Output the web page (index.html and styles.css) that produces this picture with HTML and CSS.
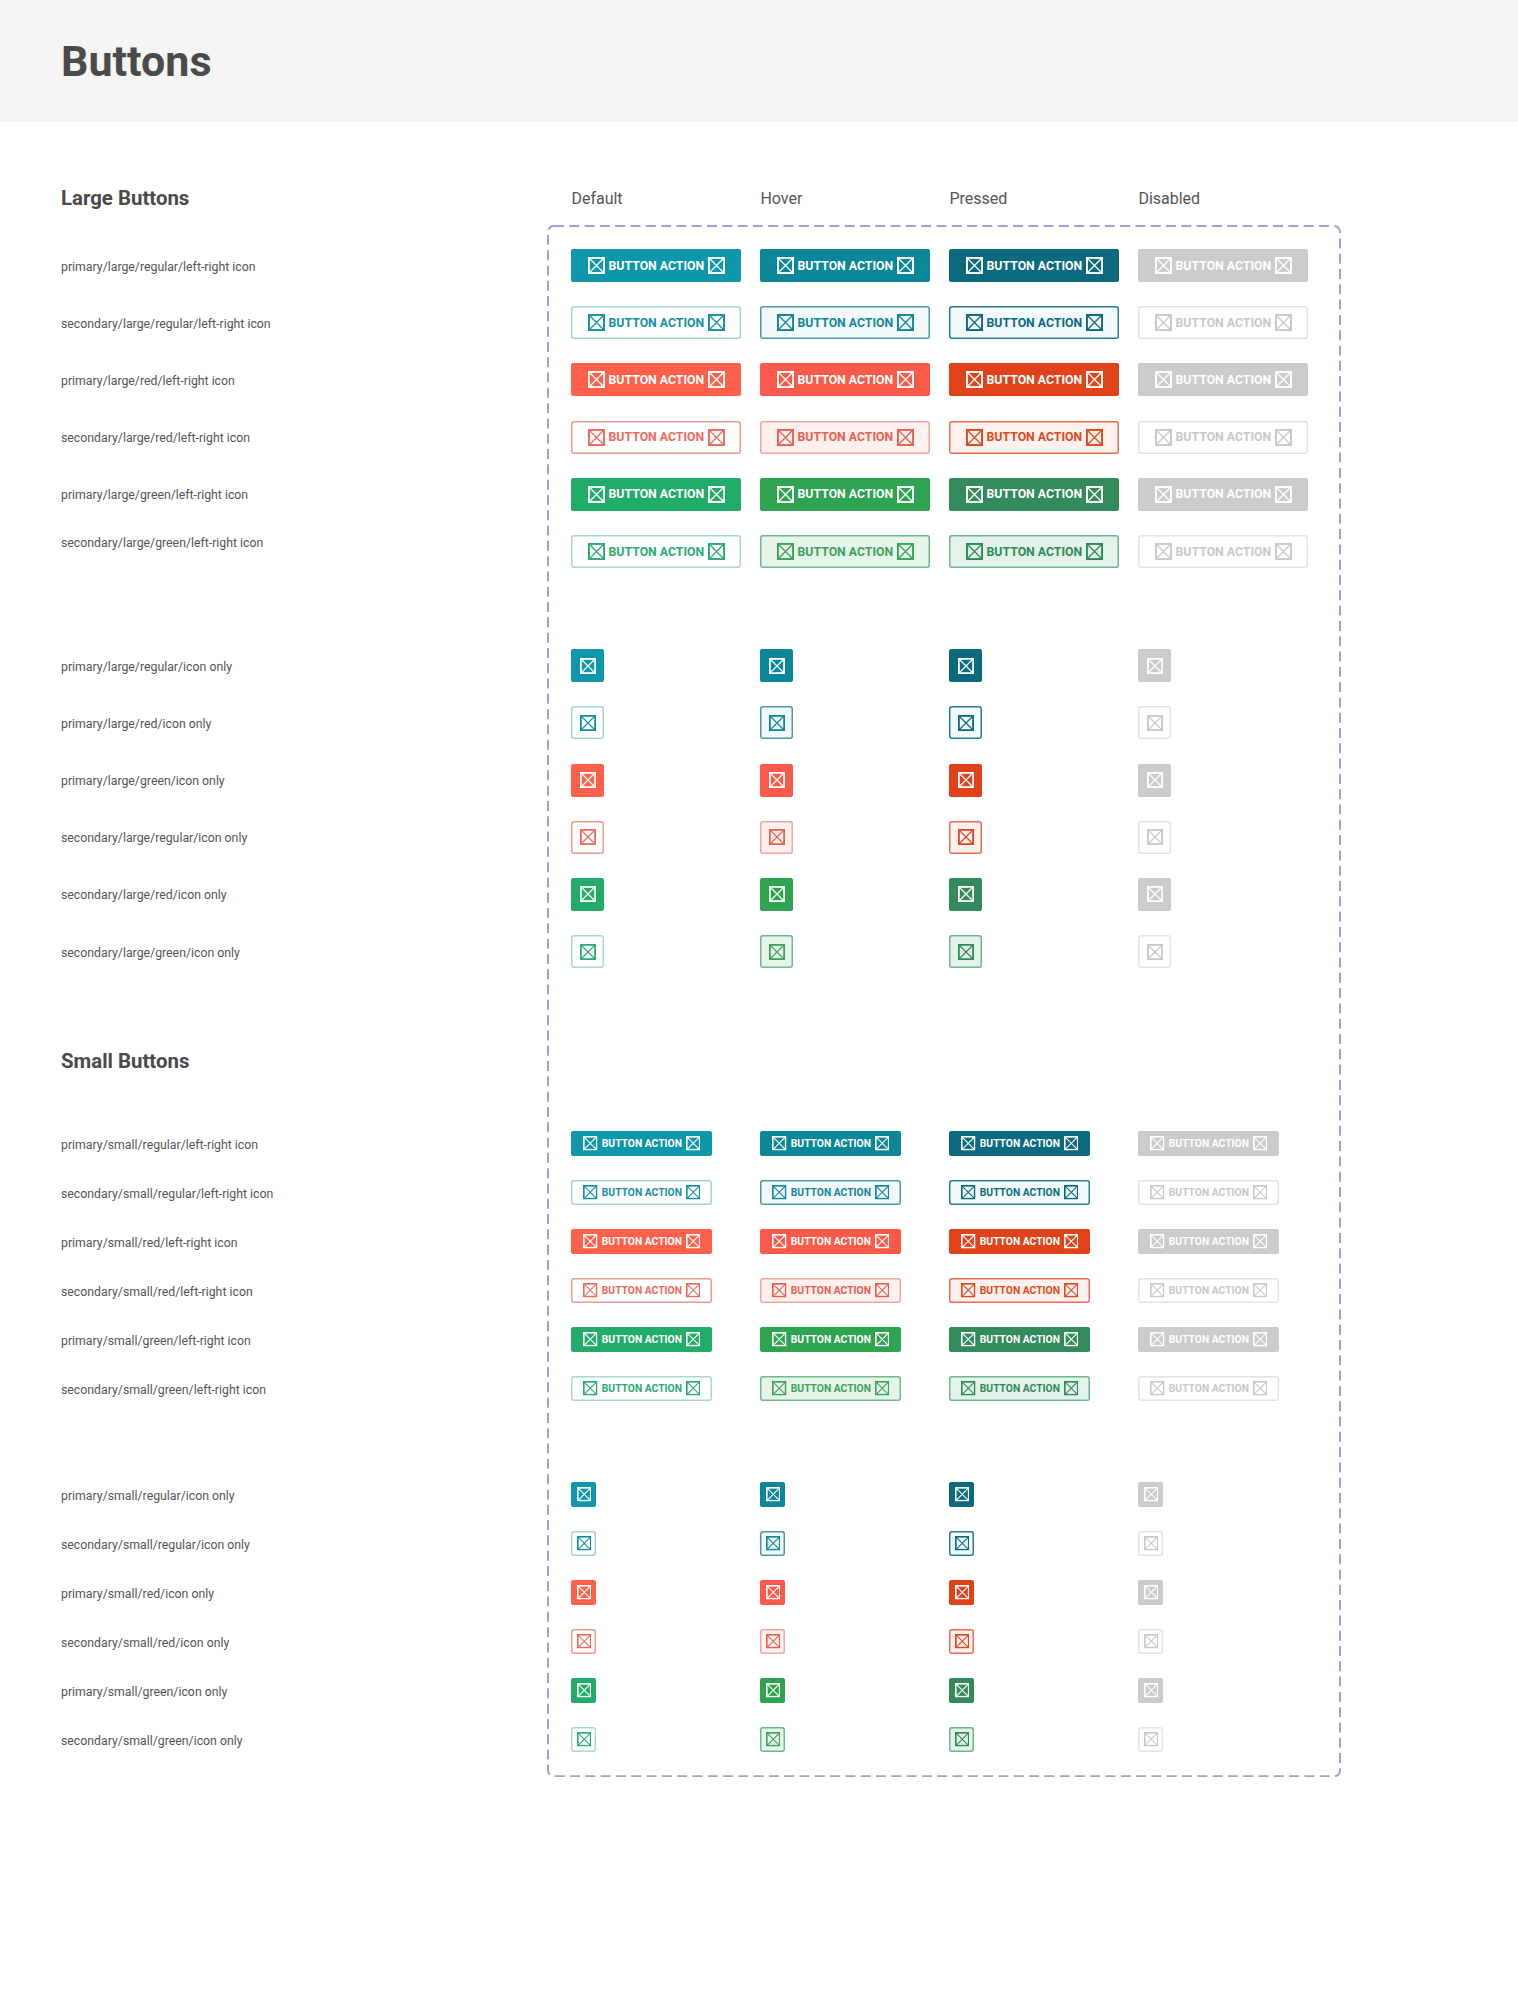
FILE: index.html
```html
<!DOCTYPE html>
<html lang="en">
<head>
  <meta charset="UTF-8" />
  <meta name="viewport" content="width=device-width, initial-scale=1" />
  <title>Buttons</title>
  <link rel="stylesheet" href="styles.css">
</head>
<body>

  <!-- Placeholder icon, reused by every button -->
  <svg class="sprite" aria-hidden="true" focusable="false">
    <symbol id="box-x" viewBox="0 0 16 16">
      <rect x="0.9" y="0.9" width="14.2" height="14.2" fill="none" stroke="currentColor" stroke-width="1.8" />
      <path d="M1 1L15 15M15 1L1 15" fill="none" stroke="currentColor" stroke-width="1.2" />
    </symbol>
  </svg>

  <header class="page-header">
    <h1>Buttons</h1>
  </header>

  <main class="board">
    <!-- Left column: row names -->
    <div class="names">
      <h2 class="names-title">Large Buttons</h2>
      <div class="group">
        <div class="name name-large">primary/large/regular/left-right icon</div>
        <div class="name name-large">secondary/large/regular/left-right icon</div>
        <div class="name name-large">primary/large/red/left-right icon</div>
        <div class="name name-large">secondary/large/red/left-right icon</div>
        <div class="name name-large">primary/large/green/left-right icon</div>
        <div class="name name-large name-raised">secondary/large/green/left-right icon</div>
      </div>
      <div class="group">
        <div class="name name-large">primary/large/regular/icon only</div>
        <div class="name name-large">primary/large/red/icon only</div>
        <div class="name name-large">primary/large/green/icon only</div>
        <div class="name name-large">secondary/large/regular/icon only</div>
        <div class="name name-large">secondary/large/red/icon only</div>
        <div class="name name-large">secondary/large/green/icon only</div>
      </div>
      <h2 class="names-title names-title-small">Small Buttons</h2>
      <div class="group">
        <div class="name name-small">primary/small/regular/left-right icon</div>
        <div class="name name-small">secondary/small/regular/left-right icon</div>
        <div class="name name-small">primary/small/red/left-right icon</div>
        <div class="name name-small">secondary/small/red/left-right icon</div>
        <div class="name name-small">primary/small/green/left-right icon</div>
        <div class="name name-small">secondary/small/green/left-right icon</div>
      </div>
      <div class="group">
        <div class="name name-small">primary/small/regular/icon only</div>
        <div class="name name-small">secondary/small/regular/icon only</div>
        <div class="name name-small">primary/small/red/icon only</div>
        <div class="name name-small">secondary/small/red/icon only</div>
        <div class="name name-small">primary/small/green/icon only</div>
        <div class="name name-small">secondary/small/green/icon only</div>
      </div>
    </div>

    <!-- Right column: state headings and the dashed component frame -->
    <div class="panel">
      <div class="states">
        <span>Default</span>
        <span>Hover</span>
        <span>Pressed</span>
        <span>Disabled</span>
      </div>

      <div class="frame">
        <svg class="frame-line" aria-hidden="true" focusable="false"><rect class="frame-rect" x="1" y="1" rx="6" ry="6" /></svg>

        <!-- Large, both icons -->
        <div class="group">
          <div class="row row-large">
            <button class="btn primary regular default"><svg class="icon"><use href="#box-x" /></svg>Button action<svg class="icon"><use href="#box-x" /></svg></button>
            <button class="btn primary regular hover"><svg class="icon"><use href="#box-x" /></svg>Button action<svg class="icon"><use href="#box-x" /></svg></button>
            <button class="btn primary regular pressed"><svg class="icon"><use href="#box-x" /></svg>Button action<svg class="icon"><use href="#box-x" /></svg></button>
            <button class="btn primary disabled"><svg class="icon"><use href="#box-x" /></svg>Button action<svg class="icon"><use href="#box-x" /></svg></button>
          </div>
          <div class="row row-large">
            <button class="btn secondary regular default"><svg class="icon"><use href="#box-x" /></svg>Button action<svg class="icon"><use href="#box-x" /></svg></button>
            <button class="btn secondary regular hover"><svg class="icon"><use href="#box-x" /></svg>Button action<svg class="icon"><use href="#box-x" /></svg></button>
            <button class="btn secondary regular pressed"><svg class="icon"><use href="#box-x" /></svg>Button action<svg class="icon"><use href="#box-x" /></svg></button>
            <button class="btn secondary disabled"><svg class="icon"><use href="#box-x" /></svg>Button action<svg class="icon"><use href="#box-x" /></svg></button>
          </div>
          <div class="row row-large">
            <button class="btn primary red default"><svg class="icon"><use href="#box-x" /></svg>Button action<svg class="icon"><use href="#box-x" /></svg></button>
            <button class="btn primary red hover"><svg class="icon"><use href="#box-x" /></svg>Button action<svg class="icon"><use href="#box-x" /></svg></button>
            <button class="btn primary red pressed"><svg class="icon"><use href="#box-x" /></svg>Button action<svg class="icon"><use href="#box-x" /></svg></button>
            <button class="btn primary disabled"><svg class="icon"><use href="#box-x" /></svg>Button action<svg class="icon"><use href="#box-x" /></svg></button>
          </div>
          <div class="row row-large">
            <button class="btn secondary red default"><svg class="icon"><use href="#box-x" /></svg>Button action<svg class="icon"><use href="#box-x" /></svg></button>
            <button class="btn secondary red hover"><svg class="icon"><use href="#box-x" /></svg>Button action<svg class="icon"><use href="#box-x" /></svg></button>
            <button class="btn secondary red pressed"><svg class="icon"><use href="#box-x" /></svg>Button action<svg class="icon"><use href="#box-x" /></svg></button>
            <button class="btn secondary disabled"><svg class="icon"><use href="#box-x" /></svg>Button action<svg class="icon"><use href="#box-x" /></svg></button>
          </div>
          <div class="row row-large">
            <button class="btn primary green default"><svg class="icon"><use href="#box-x" /></svg>Button action<svg class="icon"><use href="#box-x" /></svg></button>
            <button class="btn primary green hover"><svg class="icon"><use href="#box-x" /></svg>Button action<svg class="icon"><use href="#box-x" /></svg></button>
            <button class="btn primary green pressed"><svg class="icon"><use href="#box-x" /></svg>Button action<svg class="icon"><use href="#box-x" /></svg></button>
            <button class="btn primary disabled"><svg class="icon"><use href="#box-x" /></svg>Button action<svg class="icon"><use href="#box-x" /></svg></button>
          </div>
          <div class="row row-large">
            <button class="btn secondary green default"><svg class="icon"><use href="#box-x" /></svg>Button action<svg class="icon"><use href="#box-x" /></svg></button>
            <button class="btn secondary green hover"><svg class="icon"><use href="#box-x" /></svg>Button action<svg class="icon"><use href="#box-x" /></svg></button>
            <button class="btn secondary green pressed"><svg class="icon"><use href="#box-x" /></svg>Button action<svg class="icon"><use href="#box-x" /></svg></button>
            <button class="btn secondary disabled"><svg class="icon"><use href="#box-x" /></svg>Button action<svg class="icon"><use href="#box-x" /></svg></button>
          </div>
        </div>

        <!-- Large, icon only -->
        <div class="group group-last-large">
          <div class="row row-large">
            <button class="btn only primary regular default" aria-label="Action"><svg class="icon"><use href="#box-x" /></svg></button>
            <button class="btn only primary regular hover" aria-label="Action"><svg class="icon"><use href="#box-x" /></svg></button>
            <button class="btn only primary regular pressed" aria-label="Action"><svg class="icon"><use href="#box-x" /></svg></button>
            <button class="btn only primary disabled" aria-label="Action"><svg class="icon"><use href="#box-x" /></svg></button>
          </div>
          <div class="row row-large">
            <button class="btn only secondary regular default" aria-label="Action"><svg class="icon"><use href="#box-x" /></svg></button>
            <button class="btn only secondary regular hover" aria-label="Action"><svg class="icon"><use href="#box-x" /></svg></button>
            <button class="btn only secondary regular pressed" aria-label="Action"><svg class="icon"><use href="#box-x" /></svg></button>
            <button class="btn only secondary disabled" aria-label="Action"><svg class="icon"><use href="#box-x" /></svg></button>
          </div>
          <div class="row row-large">
            <button class="btn only primary red default" aria-label="Action"><svg class="icon"><use href="#box-x" /></svg></button>
            <button class="btn only primary red hover" aria-label="Action"><svg class="icon"><use href="#box-x" /></svg></button>
            <button class="btn only primary red pressed" aria-label="Action"><svg class="icon"><use href="#box-x" /></svg></button>
            <button class="btn only primary disabled" aria-label="Action"><svg class="icon"><use href="#box-x" /></svg></button>
          </div>
          <div class="row row-large">
            <button class="btn only secondary red default" aria-label="Action"><svg class="icon"><use href="#box-x" /></svg></button>
            <button class="btn only secondary red hover" aria-label="Action"><svg class="icon"><use href="#box-x" /></svg></button>
            <button class="btn only secondary red pressed" aria-label="Action"><svg class="icon"><use href="#box-x" /></svg></button>
            <button class="btn only secondary disabled" aria-label="Action"><svg class="icon"><use href="#box-x" /></svg></button>
          </div>
          <div class="row row-large">
            <button class="btn only primary green default" aria-label="Action"><svg class="icon"><use href="#box-x" /></svg></button>
            <button class="btn only primary green hover" aria-label="Action"><svg class="icon"><use href="#box-x" /></svg></button>
            <button class="btn only primary green pressed" aria-label="Action"><svg class="icon"><use href="#box-x" /></svg></button>
            <button class="btn only primary disabled" aria-label="Action"><svg class="icon"><use href="#box-x" /></svg></button>
          </div>
          <div class="row row-large">
            <button class="btn only secondary green default" aria-label="Action"><svg class="icon"><use href="#box-x" /></svg></button>
            <button class="btn only secondary green hover" aria-label="Action"><svg class="icon"><use href="#box-x" /></svg></button>
            <button class="btn only secondary green pressed" aria-label="Action"><svg class="icon"><use href="#box-x" /></svg></button>
            <button class="btn only secondary disabled" aria-label="Action"><svg class="icon"><use href="#box-x" /></svg></button>
          </div>
        </div>

        <!-- Small, both icons -->
        <div class="group">
          <div class="row row-small">
            <button class="btn small primary regular default"><svg class="icon"><use href="#box-x" /></svg>Button action<svg class="icon"><use href="#box-x" /></svg></button>
            <button class="btn small primary regular hover"><svg class="icon"><use href="#box-x" /></svg>Button action<svg class="icon"><use href="#box-x" /></svg></button>
            <button class="btn small primary regular pressed"><svg class="icon"><use href="#box-x" /></svg>Button action<svg class="icon"><use href="#box-x" /></svg></button>
            <button class="btn small primary disabled"><svg class="icon"><use href="#box-x" /></svg>Button action<svg class="icon"><use href="#box-x" /></svg></button>
          </div>
          <div class="row row-small">
            <button class="btn small secondary regular default"><svg class="icon"><use href="#box-x" /></svg>Button action<svg class="icon"><use href="#box-x" /></svg></button>
            <button class="btn small secondary regular hover"><svg class="icon"><use href="#box-x" /></svg>Button action<svg class="icon"><use href="#box-x" /></svg></button>
            <button class="btn small secondary regular pressed"><svg class="icon"><use href="#box-x" /></svg>Button action<svg class="icon"><use href="#box-x" /></svg></button>
            <button class="btn small secondary disabled"><svg class="icon"><use href="#box-x" /></svg>Button action<svg class="icon"><use href="#box-x" /></svg></button>
          </div>
          <div class="row row-small">
            <button class="btn small primary red default"><svg class="icon"><use href="#box-x" /></svg>Button action<svg class="icon"><use href="#box-x" /></svg></button>
            <button class="btn small primary red hover"><svg class="icon"><use href="#box-x" /></svg>Button action<svg class="icon"><use href="#box-x" /></svg></button>
            <button class="btn small primary red pressed"><svg class="icon"><use href="#box-x" /></svg>Button action<svg class="icon"><use href="#box-x" /></svg></button>
            <button class="btn small primary disabled"><svg class="icon"><use href="#box-x" /></svg>Button action<svg class="icon"><use href="#box-x" /></svg></button>
          </div>
          <div class="row row-small">
            <button class="btn small secondary red default"><svg class="icon"><use href="#box-x" /></svg>Button action<svg class="icon"><use href="#box-x" /></svg></button>
            <button class="btn small secondary red hover"><svg class="icon"><use href="#box-x" /></svg>Button action<svg class="icon"><use href="#box-x" /></svg></button>
            <button class="btn small secondary red pressed"><svg class="icon"><use href="#box-x" /></svg>Button action<svg class="icon"><use href="#box-x" /></svg></button>
            <button class="btn small secondary disabled"><svg class="icon"><use href="#box-x" /></svg>Button action<svg class="icon"><use href="#box-x" /></svg></button>
          </div>
          <div class="row row-small">
            <button class="btn small primary green default"><svg class="icon"><use href="#box-x" /></svg>Button action<svg class="icon"><use href="#box-x" /></svg></button>
            <button class="btn small primary green hover"><svg class="icon"><use href="#box-x" /></svg>Button action<svg class="icon"><use href="#box-x" /></svg></button>
            <button class="btn small primary green pressed"><svg class="icon"><use href="#box-x" /></svg>Button action<svg class="icon"><use href="#box-x" /></svg></button>
            <button class="btn small primary disabled"><svg class="icon"><use href="#box-x" /></svg>Button action<svg class="icon"><use href="#box-x" /></svg></button>
          </div>
          <div class="row row-small">
            <button class="btn small secondary green default"><svg class="icon"><use href="#box-x" /></svg>Button action<svg class="icon"><use href="#box-x" /></svg></button>
            <button class="btn small secondary green hover"><svg class="icon"><use href="#box-x" /></svg>Button action<svg class="icon"><use href="#box-x" /></svg></button>
            <button class="btn small secondary green pressed"><svg class="icon"><use href="#box-x" /></svg>Button action<svg class="icon"><use href="#box-x" /></svg></button>
            <button class="btn small secondary disabled"><svg class="icon"><use href="#box-x" /></svg>Button action<svg class="icon"><use href="#box-x" /></svg></button>
          </div>
        </div>

        <!-- Small, icon only -->
        <div class="group group-end">
          <div class="row row-small">
            <button class="btn small only primary regular default" aria-label="Action"><svg class="icon"><use href="#box-x" /></svg></button>
            <button class="btn small only primary regular hover" aria-label="Action"><svg class="icon"><use href="#box-x" /></svg></button>
            <button class="btn small only primary regular pressed" aria-label="Action"><svg class="icon"><use href="#box-x" /></svg></button>
            <button class="btn small only primary disabled" aria-label="Action"><svg class="icon"><use href="#box-x" /></svg></button>
          </div>
          <div class="row row-small">
            <button class="btn small only secondary regular default" aria-label="Action"><svg class="icon"><use href="#box-x" /></svg></button>
            <button class="btn small only secondary regular hover" aria-label="Action"><svg class="icon"><use href="#box-x" /></svg></button>
            <button class="btn small only secondary regular pressed" aria-label="Action"><svg class="icon"><use href="#box-x" /></svg></button>
            <button class="btn small only secondary disabled" aria-label="Action"><svg class="icon"><use href="#box-x" /></svg></button>
          </div>
          <div class="row row-small">
            <button class="btn small only primary red default" aria-label="Action"><svg class="icon"><use href="#box-x" /></svg></button>
            <button class="btn small only primary red hover" aria-label="Action"><svg class="icon"><use href="#box-x" /></svg></button>
            <button class="btn small only primary red pressed" aria-label="Action"><svg class="icon"><use href="#box-x" /></svg></button>
            <button class="btn small only primary disabled" aria-label="Action"><svg class="icon"><use href="#box-x" /></svg></button>
          </div>
          <div class="row row-small">
            <button class="btn small only secondary red default" aria-label="Action"><svg class="icon"><use href="#box-x" /></svg></button>
            <button class="btn small only secondary red hover" aria-label="Action"><svg class="icon"><use href="#box-x" /></svg></button>
            <button class="btn small only secondary red pressed" aria-label="Action"><svg class="icon"><use href="#box-x" /></svg></button>
            <button class="btn small only secondary disabled" aria-label="Action"><svg class="icon"><use href="#box-x" /></svg></button>
          </div>
          <div class="row row-small">
            <button class="btn small only primary green default" aria-label="Action"><svg class="icon"><use href="#box-x" /></svg></button>
            <button class="btn small only primary green hover" aria-label="Action"><svg class="icon"><use href="#box-x" /></svg></button>
            <button class="btn small only primary green pressed" aria-label="Action"><svg class="icon"><use href="#box-x" /></svg></button>
            <button class="btn small only primary disabled" aria-label="Action"><svg class="icon"><use href="#box-x" /></svg></button>
          </div>
          <div class="row row-small">
            <button class="btn small only secondary green default" aria-label="Action"><svg class="icon"><use href="#box-x" /></svg></button>
            <button class="btn small only secondary green hover" aria-label="Action"><svg class="icon"><use href="#box-x" /></svg></button>
            <button class="btn small only secondary green pressed" aria-label="Action"><svg class="icon"><use href="#box-x" /></svg></button>
            <button class="btn small only secondary disabled" aria-label="Action"><svg class="icon"><use href="#box-x" /></svg></button>
          </div>
        </div>
      </div>
    </div>
  </main>

</body>
</html>
```

FILE: styles.css
```css
/* Reset & base */
* {
  box-sizing: border-box;
}

body {
  margin: 0;
  background-color: #fff;
  color: #4a4a4a;
  font-family: Roboto, sans-serif;
}

.sprite {
  display: none;
}

/* Page header */
.page-header {
  height: 122px;
  padding-left: 61px;
  display: flex;
  align-items: center;
  background-color: #f5f5f5;
}

h1 {
  margin: 0;
  font-size: 43px;
  font-weight: 700;
  color: #4a4a4a;
}

/* Two columns: names on the left, frame on the right */
.board {
  display: flex;
  padding: 58px 0 0 61px;
}

.names {
  width: 486px;
}

.panel {
  width: 794px;
}

.names-title {
  height: 36px;
  margin: 0 0 21px;
  display: flex;
  align-items: center;
  font-size: 20.4px;
  font-weight: 700;
}

.names-title-small {
  margin: 62.5px 0 40px;
}

.group {
  margin-bottom: 57px;
}

.name {
  padding-top: 2px;
  display: flex;
  align-items: center;
  font-size: 12.3px;
  color: #555;
}

.name-large {
  height: 57.2px;
}

.name-small {
  height: 49px;
  padding-top: 4px;
}

.name-raised {
  padding: 0 0 18px;
}

/* State headings */
.states {
  height: 36px;
  margin-bottom: 9px;
  padding-left: 24.4px;
  display: grid;
  grid-template-columns: repeat(4, 189px);
  align-items: center;
  font-size: 16px;
  color: #555;
}

/* Dashed frame */
.frame {
  position: relative;
  padding: 12px 0 13.5px;
}

.frame-line {
  position: absolute;
  top: 0;
  left: 0;
  width: 100%;
  height: 100%;
}

.frame-rect {
  width: calc(100% - 2px);
  height: calc(100% - 2px);
  fill: none;
  stroke: #a99be0;
  stroke-width: 2;
  stroke-dasharray: 10 5.3;
}

.group-last-large {
  margin-bottom: 138.5px;
}

.group-end {
  margin-bottom: 0;
}

.row {
  padding-left: 24.4px;
  display: grid;
  grid-template-columns: repeat(4, 189px);
  align-items: center;
  justify-items: start;
  position: relative;
}

.row-large {
  height: 57.2px;
}

.row-small {
  height: 49px;
}

/* Buttons */
.btn {
  width: 170px;
  height: 33px;
  padding: 0;
  display: inline-flex;
  align-items: center;
  justify-content: center;
  gap: 4px;
  border: none;
  border-radius: 3px;
  background-color: var(--bg);
  box-shadow: inset 0 0 0 1.5px var(--line);
  color: var(--fg);
  font-family: inherit;
  font-size: 12.3px;
  font-weight: 700;
  text-transform: uppercase;
  white-space: nowrap;
}

.btn .icon {
  width: 17px;
  height: 17px;
  flex-shrink: 0;
}

.btn.small {
  width: 141px;
  height: 25px;
  gap: 4px;
  font-size: 10.3px;
}

.btn.small .icon {
  width: 14.5px;
  height: 14.5px;
}

.btn.only {
  width: 33px;
}

.btn.only .icon {
  width: 16px;
  height: 16px;
}

.btn.small.only {
  width: 25px;
}

.btn.small.only .icon {
  width: 14.5px;
  height: 14.5px;
}

/* Primary */
.primary {
  --fg: #fff;
}

.primary.regular.default { --bg: #0e97ab; --line: #0e97ab; }
.primary.regular.hover { --bg: #0b8799; --line: #0b8799; }
.primary.regular.pressed { --bg: #0b6a7d; --line: #0b6a7d; }
.primary.red.default { --bg: #ff604c; --line: #ff604c; }
.primary.red.hover { --bg: #f95a4a; --line: #f95a4a; }
.primary.red.pressed { --bg: #e0431a; --line: #e0431a; }
.primary.green.default { --bg: #22ac6a; --line: #22ac6a; }
.primary.green.hover { --bg: #2ea350; --line: #2ea350; }
.primary.green.pressed { --bg: #338a5a; --line: #338a5a; }
.primary.disabled { --bg: #ccc; --line: #ccc; }

/* Secondary */
.secondary.regular.default { --bg: #fff; --line: #a3d3d8; --fg: #1590a3; }
.secondary.regular.hover { --bg: #f2f9fb; --line: #4d97a8; --fg: #14869a; }
.secondary.regular.pressed { --bg: #f2fafc; --line: #2a7d90; --fg: #0c6a7e; }
.secondary.red.default { --bg: #fff; --line: #ea9a90; --fg: #ee6a5c; }
.secondary.red.hover { --bg: #fdf0ee; --line: #eda89f; --fg: #e9604f; }
.secondary.red.pressed { --bg: #fff1ed; --line: #e66e55; --fg: #dd4a20; }
.secondary.green.default { --bg: #fff; --line: #a8dcc6; --fg: #2aac72; }
.secondary.green.hover { --bg: #e6f4ea; --line: #6dbb88; --fg: #3da35c; }
.secondary.green.pressed { --bg: #e4f3ea; --line: #6fb58d; --fg: #2f8a5a; }
.secondary.disabled { --bg: #fff; --line: #e4e4e4; --fg: #c9c9c9; }
```
